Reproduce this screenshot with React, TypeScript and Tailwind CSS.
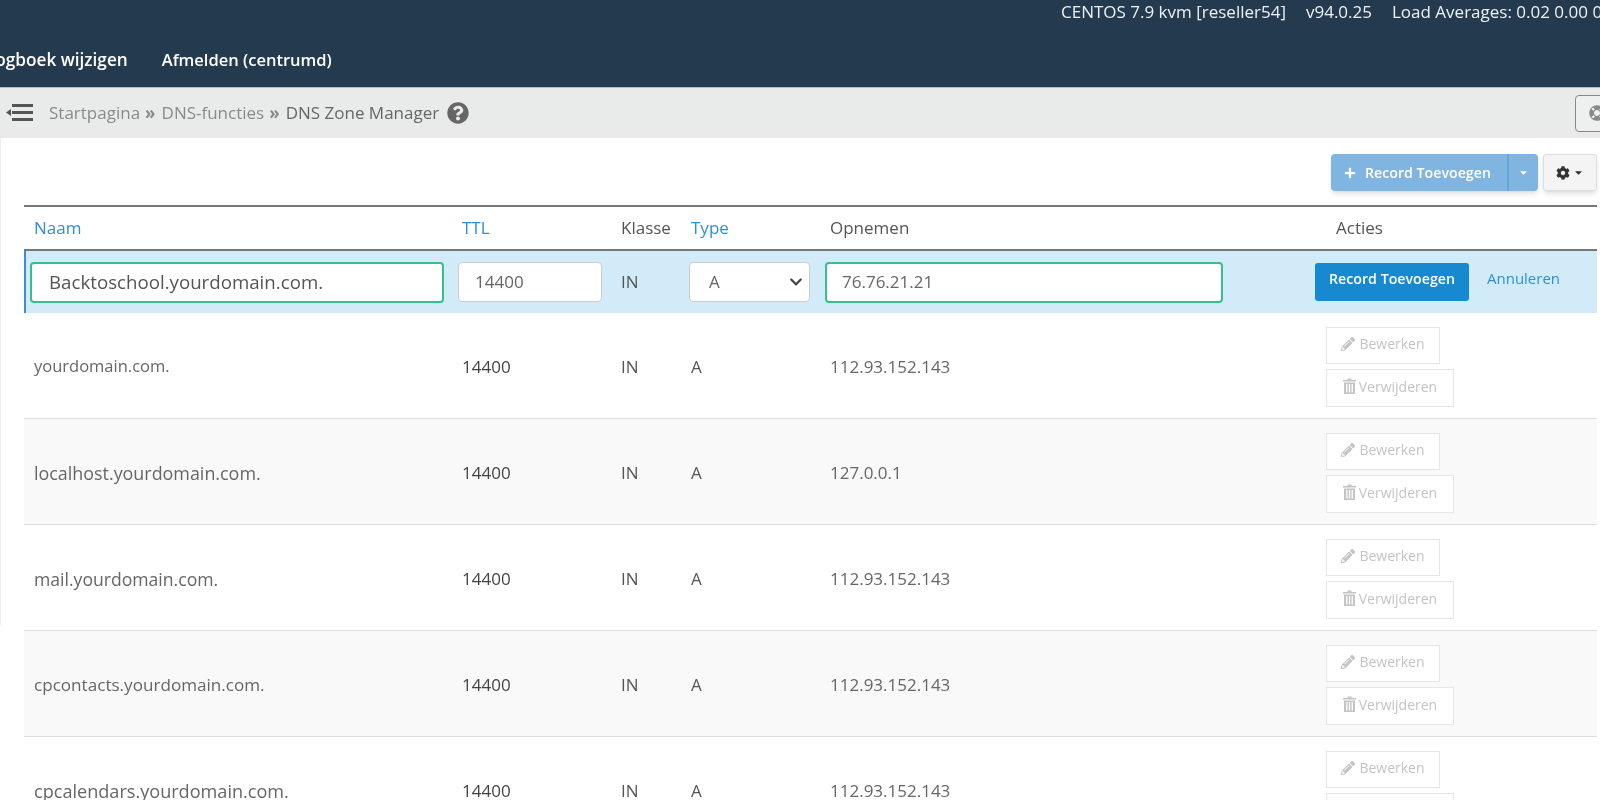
import React from "react";
import { FaPencilAlt, FaCog, FaQuestionCircle, FaPlus, FaCaretDown, FaChevronDown, FaLifeRing } from "react-icons/fa";

const records = [
  { name: "yourdomain.com.", size: "text-[16.5px]", value: "112.93.152.143" },
  { name: "localhost.yourdomain.com.", size: "text-[17.9px]", value: "127.0.0.1" },
  { name: "mail.yourdomain.com.", size: "text-[17.6px]", value: "112.93.152.143" },
  { name: "cpcontacts.yourdomain.com.", size: "text-[17.1px]", value: "112.93.152.143" },
  { name: "cpcalendars.yourdomain.com.", size: "text-[18.1px]", value: "112.93.152.143" },
];

const MenuIcon = () => (
  <svg width="30" height="24" viewBox="0 0 30 24" className="ml-[5px] text-[#555]">
    <rect x="7" y="3" width="21" height="3" fill="currentColor" />
    <rect x="7" y="10" width="21" height="3" fill="currentColor" />
    <rect x="7" y="17" width="21" height="3" fill="currentColor" />
    <polygon points="1,11.5 6,8 6,15" fill="currentColor" />
  </svg>
);

// glyphicon style bin: lid, handle and a ribbed body
const TrashIcon = () => (
  <svg width="13" height="16" viewBox="0 0 13 16" className="shrink-0">
    <path d="M4.5 2V0.5h4V2H13v1.5H0V2z" fill="currentColor" />
    <path d="M1 4.5h11V16H1zM3.2 6v8.5h1.3V6zM5.9 6v8.5h1.3V6zM8.6 6v8.5h1.3V6z" fill="currentColor" fillRule="evenodd" />
  </svg>
);

const Record = ({ name, size, value, even }: { name: string; size: string; value: string; even: boolean }) => (
  <div className={`flex h-[106px] shrink-0 border-b border-[#ddd] text-[17px] text-[#555] ${even ? "bg-[#f9f9f9]" : "bg-white"}`}>
    <div className={`w-[438px] pl-[10px] pt-[41px] whitespace-nowrap text-[#666] ${size}`}>{name}</div>
    <div className="w-[159px] pt-[41px] text-[#444]">14400</div>
    <div className="w-[70px] pt-[41px]">IN</div>
    <div className="w-[139px] pt-[41px]">A</div>
    <div className="w-[496px] pt-[41px] text-[#666]">{value}</div>
    <div className="flex flex-col items-start gap-[5px] pt-[14px] text-[14px] text-[#c4c4c4]">
      <div className="flex h-[37px] w-[114px] items-center justify-center gap-[4px] border border-[#e6e6e6] bg-white pb-[4px]">
        <FaPencilAlt className="h-[14px] w-[14px]" />
        Bewerken
      </div>
      <div className="flex h-[38px] w-[128px] items-center justify-center gap-[3px] border border-[#e6e6e6] bg-white pb-[4px]">
        <TrashIcon />
        Verwijderen
      </div>
    </div>
  </div>
);

export default function App() {
  return (
    <div className="flex h-[800px] w-[1600px] flex-col overflow-hidden bg-white font-['Open_Sans',sans-serif] blur-[0.7px]">
      <header className="h-[87px] shrink-0 bg-[#243a4f] text-white">
        <div className="flex h-[24px] items-center gap-[20px] pl-[1061px] text-[17px] whitespace-nowrap text-[#eef1f3]">
          <span>CENTOS 7.9 kvm [reseller54]</span>
          <span>v94.0.25</span>
          <span>Load Averages: 0.02 0.00 0.00</span>
        </div>
        <nav className="mt-[23px] -ml-[14px] flex items-center gap-[34px] text-[16.5px] font-semibold whitespace-nowrap">
          <span className="text-[17.2px]">Logboek wijzigen</span>
          <span>Afmelden (centrumd)</span>
        </nav>
      </header>

      <div className="flex h-[51px] shrink-0 items-center justify-between border-t border-[#bbb] bg-[#e9ebea]">
        <div className="flex items-center text-[17px] text-[#8a8a8a]">
          <MenuIcon />
          <div className="ml-[14px] flex items-center gap-[5px]">
            <span>Startpagina</span>
            <span className="font-bold">»</span>
            <span className="ml-[1px]">DNS-functies</span>
            <span className="font-bold">»</span>
            <span className="ml-[1px] text-[#666]">DNS Zone Manager</span>
            <FaQuestionCircle className="ml-[3px] h-[22px] w-[22px] text-[#666]" />
          </div>
        </div>
        <div className="-mr-[20px] flex h-[37px] w-[45px] items-center rounded-[4px] border border-[#888] bg-[#eeefef] pl-[13px]">
          <FaLifeRing className="h-[16px] w-[16px] text-[#888]" />
        </div>
      </div>

      <main className="relative flex min-h-0 flex-1 flex-col pr-[3px] pl-[24px]">
        <div className="absolute top-0 left-0 h-[487px] w-[1px] bg-[#eeeeee]" />
        <div className="flex h-[67px] shrink-0 items-start justify-end gap-[5px] pt-[16px]">
          <div className="flex h-[37px] overflow-hidden rounded-[4px] bg-[#7fb5e0] text-[14.2px] font-semibold text-white shadow-md">
            <div className="flex w-[176px] items-center gap-[9px] pl-[13px]">
              <FaPlus className="h-[12px] w-[12px]" />
              Record Toevoegen
            </div>
            <div className="flex w-[31px] items-center justify-center border-l-2 border-[#63a6da]">
              <FaCaretDown className="h-[11px] w-[11px]" />
            </div>
          </div>
          <div className="flex h-[37px] w-[54px] items-center justify-center gap-[3px] rounded-[3px] border border-[#ddd] bg-[#f4f4f4] text-[#333] shadow-md">
            <FaCog className="h-[14px] w-[14px]" />
            <FaCaretDown className="h-[11px] w-[11px]" />
          </div>
        </div>

        <div className="flex h-[46px] shrink-0 items-center border-y-2 border-[#777] text-[17px] text-[#555]">
          <div className="w-[438px] pl-[10px] text-[#2e8fd6]">Naam</div>
          <div className="w-[159px] text-[#2e8fd6]">TTL</div>
          <div className="w-[70px]">Klasse</div>
          <div className="w-[139px] text-[#2e8fd6]">Type</div>
          <div className="w-[506px]">Opnemen</div>
          <div>Acties</div>
        </div>

        <div className="flex h-[62px] shrink-0 items-center border-l-2 border-[#3f8fd0] bg-[#d1ecf8] text-[17px] text-[#555]">
          <div className="ml-[4px] flex h-[41px] w-[414px] items-center rounded-[4px] border-2 border-[#35bf8d] bg-white pl-[17px] text-[18.7px]">
            Backtoschool.yourdomain.com.
          </div>
          <div className="ml-[14px] flex h-[40px] w-[144px] items-center rounded-[4px] border border-[#ccc] bg-white pl-[16px] text-[#666]">14400</div>
          <div className="ml-[19px] w-[68px]">IN</div>
          <div className="flex h-[40px] w-[121px] items-center justify-between rounded-[4px] border border-[#ccc] bg-white pr-[6px] pl-[19px] text-[#666]">
            A
            <FaChevronDown className="h-[14px] w-[14px] text-[#444]" />
          </div>
          <div className="ml-[15px] flex h-[41px] w-[398px] items-center rounded-[4px] border-2 border-[#35bf8d] bg-white pl-[15px] text-[#666]">76.76.21.21</div>
          <div className="ml-[92px] flex h-[38px] w-[154px] items-center justify-center rounded-[3px] bg-[#1689d0] pb-[6px] text-[14.2px] font-semibold text-white">
            Record Toevoegen
          </div>
          <span className="ml-[18px] pb-[8px] text-[15px] text-[#2e8fd6]">Annuleren</span>
        </div>

        {records.map((r, i) => (
          <Record key={r.name} name={r.name} size={r.size} value={r.value} even={i % 2 === 1} />
        ))}
      </main>
    </div>
  );
}
